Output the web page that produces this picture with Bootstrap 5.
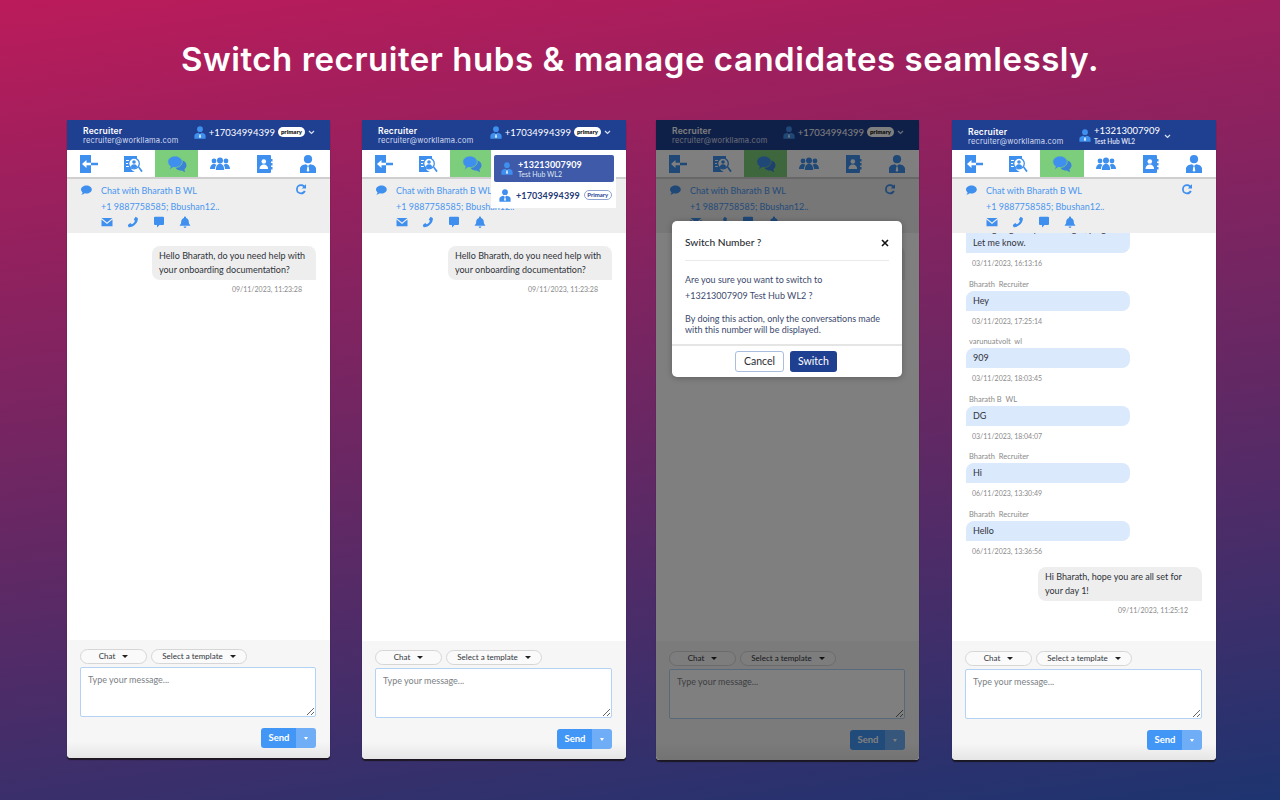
<!DOCTYPE html>
<html lang="en">
<head>
  <meta charset="UTF-8">
  <meta name="viewport" content="width=device-width, initial-scale=1.0">
  <title>Switch recruiter hubs</title>
  <link rel="stylesheet" href="https://cdn.jsdelivr.net/npm/bootstrap@5.3.0/dist/css/bootstrap.min.css">
  <style>
    html, body { height: 100%; }
    body {
      width: 1280px; height: 800px; overflow: hidden;
      background: linear-gradient(172deg, #bb1b5a 0%, #6a2763 52%, #1d3470 100%);
      font-family: "Lato", "Liberation Sans", sans-serif;
    }
    .hero-title {
      font-family: "Inter", "Liberation Sans", sans-serif;
      font-size: 33px; font-weight: 600; line-height: 40px; color: #fff;
      padding-top: 39px; margin: 0 0 41px; text-align: center; letter-spacing: .54px;
    }
    .phones { padding-left: 67px; gap: 32px; }
    .phone { width: 263px; position: relative; background: #fff; overflow: hidden; border-radius: 0 0 4px 4px; box-shadow: 0 2px 1px rgba(20, 15, 10, .75); }
    .ph-1 { height: 638px; }
    .ph-2 { height: 639px; width: 264px; }
    .ph-3, .ph-4 { height: 640px; }
    .ph-3 { margin-left: -2px; margin-right: 1px; }
    .ph-4 { width: 264px; }
    .ph-head { height: 30px; background: #1f4091; color: #fff; padding: 0 15px 0 16px; flex: none; }
    .ph-4 .rec-block { margin-top: 3px; }
    .rec-name { font-family: "Inter", sans-serif; font-size: 8.5px; font-weight: 600; letter-spacing: .2px; line-height: 10px; }
    .rec-mail { font-family: "Inter", sans-serif; font-size: 7.5px; letter-spacing: .2px; line-height: 9px; color: #d5def2; }
    .head-lift { margin-bottom: 6px; }
    .head-gap { margin-left: 2px; }
    .head-num { font-size: 9.5px; line-height: 11px; }
    .head-sub { font-size: 6.5px; font-weight: 700; line-height: 9px; color: #d5def2; margin-top: 1px; }
    .tag-pill { font-size: 6px; font-weight: 800; line-height: 10px; background: #fff; color: #222; border-radius: 5px; padding: 0 3px; margin: 0 3px 0 3px; }
    .tag-pill-line { font-size: 6px; font-weight: 700; line-height: 8px; color: #1f4091; border: 1px solid #8ea3d0; border-radius: 5px; padding: 0 2.5px; flex: none; }
    .caret-v { width: 7px; height: 5px; flex: none; }
    .caret-hub { margin: 3px 30px 0 4px; }
    .ph-tabs { height: 29px; flex: none; border-bottom: 2px solid #cfcfcf; background: #fff; }
    .ph-tab { flex: 1 1 0; }
    .ph-tab.on { background: #7dce7c; }
    .ico { fill: #3f90ee; display: block; flex: none; }
    .ico-tab { width: 20px; height: 18px; }
    .ph-info { height: 54px; flex: none; background: #eeeeee; color: #4a96f0; font-size: 9px; line-height: 16px; position: relative; z-index: 1; padding: 4px 0 0 13px; }
    .ico-sm { width: 12px; height: 12px; }
    .ico-lead { margin-top: 1px; }
    .info-body { margin-left: 9px; }
    .info-icons { gap: 14px; margin-top: 1px; }
    .info-reload { width: 12px; height: 12px; margin: 0 23px 0 auto; }
    .ph-msgs { overflow: hidden; padding: 13px 14px 0 0; }
    .msgs-hist { padding: 0 14px 26px 0; }
    .bub { width: 164px; font-size: 9px; line-height: 14px; color: #30333a; padding: 3px 7px; }
    .bub-out { background: #eeeeee; border-radius: 8px 8px 0 8px; }
    .bub-in { background: #dbe9fc; border-radius: 8px 8px 8px 0; }
    .msg-time { font-size: 7px; line-height: 10px; color: #8a8a8a; }
    .msg-name { font-size: 7.5px; line-height: 10px; color: #8a8a8a; padding-left: 3px; margin-bottom: 1px; }
    .msg-in { margin: 0 0 11.500px 14px; flex: none; }
    .msg-in .msg-time { padding: 5px 0 0 6px; }
    .msg-out { align-self: flex-end; margin: 0; flex: none; }
    .msg-out .msg-time { text-align: right; padding: 4px 14px 0 0; }
    .ph-foot { height: 118px; flex: none; background: linear-gradient(#f6f6f6 86%, #e6e6e6 100%); padding: 9px 14px 0 13px; }
    .ph-3 .ph-foot, .ph-4 .ph-foot { height: 119px; padding-top: 10px; }
    .pick { height: 15px; font-size: 8px; line-height: 13px; color: #33363c; background: #fafafa; border: 1px solid #d6d6d6; border-radius: 8px; }
    .pick-a { width: 67px; }
    .pick-b { width: 96px; }
    .pick::after { content: ""; margin-left: 7px; border-top: 3px solid #222; border-left: 3px solid transparent; border-right: 3px solid transparent; }
    .msg-box { height: 50px; font-size: 9px; line-height: 12px; padding: 6px 7px; border: 1px solid #b3d2f4; border-radius: 2px; margin-top: 3px; box-shadow: none; }
    .msg-box::placeholder { color: #7b7f85; }
    .send-row { margin-top: 11px; }
    .btn-send { background: #4296f5; color: #fff; font-size: 9.5px; font-weight: 700; width: 36px; height: 20px; padding: 0; border: 0; border-radius: 3px 0 0 3px; }
    .btn-send-more { background: #6fadf6; width: 20px; height: 20px; padding: 0; border: 0; border-radius: 0 3px 3px 0; }
    .btn-send-more::after { content: ""; border-top: 3px solid #fff; border-left: 2.5px solid transparent; border-right: 2.5px solid transparent; }
    .num-menu { position: absolute; left: 129px; top: 30px; width: 125px; height: 58px; background: #fff; z-index: 3; padding: 5px 2px 0 3px; }
    .num-on { height: 27px; background: #3e5aa8; color: #fff; border-radius: 2px; padding-left: 6px; }
    .num-off { height: 26px; padding-left: 4px; color: #1f3a78; }
    .num-txt { font-size: 9px; font-weight: 700; letter-spacing: .1px; line-height: 11px; flex: none; }
    .num-sub { font-size: 7px; line-height: 9px; color: #dfe6f6; }
    .ico-head { width: 14px; height: 15px; fill: #3f90ee; flex: none; }
    .dim { position: absolute; inset: 0; background: rgba(0, 0, 0, .5); z-index: 4; }
    .sw-modal { position: absolute; left: 16px; top: 101px; width: 230px; height: 156px; background: #fff; border-radius: 5px; z-index: 5; color: #3c4a6e; font-size: 9px; line-height: 11px; box-shadow: 0 1px 6px rgba(0,0,0,.25); }
    .sw-top { height: 40px; margin: 0 13px; border-bottom: 1px solid #eaeaea; color: #2a2d33; font-size: 10.2px; font-weight: 500; padding-top: 3px; }
    .sw-x { width: 8px; height: 8px; margin-top: 2px; }
    .sw-body { padding: 13px 13px 0; height: 83px; }
    .sw-body p { margin: 0 0 5px; }
    .sw-gap { padding-top: 7px; }
    .sw-foot { border-top: 2px solid #e5e5e5; height: 33px; gap: 6px; padding: 5px 2px 0 0; }
    .btn-cancel { width: 49px; height: 21px; padding: 0; font-size: 10.5px; color: #2a2d33; background: #fff; border: 1px solid #a9bede; border-radius: 3px; }
    .btn-switch { width: 47px; height: 21px; padding: 0; font-size: 10.5px; color: #fff; background: #1f4091; border: 0; border-radius: 3px; }
  </style>
</head>
<body>
  <svg width="0" height="0" class="position-absolute">
    <symbol id="i-exit" viewBox="0 0 20 18">
      <path d="M1 0h11v18H1z"/>
      <path fill="#fff" d="M3 9l4.500-4v2.800H12v2.400H7.500V13z"/>
      <path d="M12 7.800h7v2.400h-7z"/>
    </symbol>
    <symbol id="i-search" viewBox="0 0 20 18">
      <path d="M1 1h13v4.200a6 6 0 0 0-2 11.800H1z"/>
      <path fill="#fff" d="M3 5h4v1H3zM3 8h3v1H3zM3 11h3v1H3z"/>
      <circle cx="11" cy="8.500" r="5.300" fill="#fff" stroke="#3f90ee" stroke-width="1.300"/>
      <circle cx="11" cy="7" r="1.800"/>
      <path d="M7.800 12c.4-2 1.600-2.700 3.200-2.700s2.800.7 3.200 2.700a5 5 0 0 1-6.400 0z"/>
      <path d="M15 12.600l1.200-1 3.500 4.400-1.400 1.200z"/>
    </symbol>
    <symbol id="i-chats" viewBox="0 0 20 18">
      <path fill="#3a83d8" d="M13 5c3.600 0 6.500 2.300 6.500 5.300 0 1.600-.8 3-2.100 4l.6 3-3.300-1.800c-3.600.4-7-1.800-7-5.200S9.500 5 13 5z"/>
      <path stroke="#7dce7c" stroke-width=".8" d="M8 1c4 0 7.200 2.600 7.200 5.800S12 12.600 8 12.600c-.7 0-1.300 0-1.900-.2L2.600 15l.7-3.800C1.600 10.100.8 8.500.8 6.800.8 3.600 4 1 8 1z"/>
    </symbol>
    <symbol id="i-people" viewBox="0 0 20 18">
      <circle cx="4" cy="6" r="2.400"/><circle cx="16" cy="6" r="2.400"/>
      <path d="M0 14c0-3 1.500-5 4-5 1 0 1.800.3 2.400.8C5.500 11 5 12.500 5 14zM20 14c0-3-1.500-5-4-5-1 0-1.800.3-2.400.8.900 1.200 1.400 2.700 1.400 4.200z"/>
      <circle cx="10" cy="5.500" r="3"/>
      <path d="M5.800 15c0-4 1.700-6.300 4.200-6.300s4.200 2.300 4.200 6.300z"/>
    </symbol>
    <symbol id="i-book" viewBox="0 0 20 18">
      <path d="M3 0h13a1 1 0 0 1 1 1v3h1.500v2.500H17V8h1.500v2.500H17V12h1.500v2.500H17V17a1 1 0 0 1-1 1H3z"/>
      <circle cx="9.800" cy="6.500" r="2.300" fill="#fff"/>
      <path fill="#fff" d="M5.500 14c0-3 1.900-4.500 4.300-4.500s4.300 1.500 4.300 4.500z"/>
    </symbol>
    <symbol id="i-person" viewBox="0 0 20 18">
      <circle cx="10" cy="4.200" r="4.100"/>
      <path d="M2 18v-4.500c0-2.400 3-4 6-4.300L10 11l2-1.800c3 .3 6 1.900 6 4.300V18z"/>
      <path fill="#fff" d="M9.400 11.500h1.200l.6 4-1.200 1.600-1.200-1.600z"/>
    </symbol>
    <symbol id="i-bubble" viewBox="0 0 12 12">
      <path d="M6.500 1.500c3 0 5.300 1.700 5.300 4s-2.300 4-5.300 4c-.6 0-1.200-.1-1.700-.2-1 .9-2.300 1.300-3.600 1.300.7-.6 1.200-1.300 1.400-2.200C1.700 7.600 1 6.600 1 5.500c0-2.300 2.500-4 5.500-4z"/>
    </symbol>
    <symbol id="i-mail" viewBox="0 0 12 12">
      <path d="M.5 2h11L6 6.400zM.5 3.600v6.700h11V3.600L6 8z"/>
    </symbol>
    <symbol id="i-phone" viewBox="0 0 12 12">
      <path d="M8.600.8l2.300 1.400c.3 4.400-4.300 9.300-9.300 9L.8 9.100l2.500-2 1.400 1.200c1.400-.6 2.700-2 3.200-3.600L6.800 3.400z"/>
    </symbol>
    <symbol id="i-note" viewBox="0 0 12 12">
      <path d="M2 .8h8a1 1 0 0 1 1 1V8a1 1 0 0 1-1 1H6.500L4 11.400V9H2a1 1 0 0 1-1-1V1.800a1 1 0 0 1 1-1z"/>
    </symbol>
    <symbol id="i-bell" viewBox="0 0 12 12">
      <path d="M6 .5c.6 0 1 .4 1 1v.4c1.800.5 2.800 2 2.800 3.900 0 1.600.5 2.600 1.400 3.300v.7H.8v-.7c.9-.7 1.400-1.700 1.400-3.300 0-1.900 1-3.400 2.800-3.900v-.4c0-.6.4-1 1-1zM4.600 10.500h2.800a1.400 1.400 0 0 1-2.800 0z"/>
    </symbol>
    <symbol id="i-reload" viewBox="0 0 12 12">
      <path d="M6 1.200c1.400 0 2.600.5 3.500 1.400L11 1.200v4.200H6.800l1.500-1.500A3.300 3.300 0 0 0 6 3a3.200 3.200 0 0 0 0 6.400c1.300 0 2.400-.8 2.900-1.900l1.800.7A5 5 0 1 1 6 1.200z"/>
    </symbol>
  </svg>

  <h1 class="hero-title">Switch recruiter hubs &amp; manage candidates seamlessly.</h1>
  <div class="phones d-flex align-items-start" id="phones"></div>

  <script>
    const icon = (name, cls) => `<svg class="ico ${cls}"><use href="#i-${name}"></use></svg>`;
    const tabs = ['exit', 'search', 'chats', 'people', 'book', 'person'];

    const outMsg = (text, time) => `
      <div class="msg-out">
        <div class="bub bub-out">${text}</div>
        <div class="msg-time">${time}</div>
      </div>`;
    const inMsg = (name, text, time) => `
      <div class="msg-in">
        ${name ? `<div class="msg-name">${name}</div>` : ''}
        <div class="bub bub-in">${text}</div>
        <div class="msg-time">${time}</div>
      </div>`;

    const hello = outMsg('Hello Bharath, do you need help with your onboarding documentation?', '09/11/2023, 11:23:28');
    const history = [
      inMsg('', 'I am going to try this tonight, ping<br>Let me know.', '03/11/2023, 16:13:16'),
      inMsg('Bharath&nbsp; Recruiter', 'Hey', '03/11/2023, 17:25:14'),
      inMsg('varunuatvolt&nbsp; wl', '909', '03/11/2023, 18:03:45'),
      inMsg('Bharath B&nbsp; WL', 'DG', '03/11/2023, 18:04:07'),
      inMsg('Bharath&nbsp; Recruiter', 'Hi', '06/11/2023, 13:30:49'),
      inMsg('Bharath&nbsp; Recruiter', 'Hello', '06/11/2023, 13:36:56'),
      outMsg('Hi Bharath, hope you are all set for your day 1!', '09/11/2023, 11:25:12')
    ].join('');

    const headNumber = hub => hub
      ? `<div class="head-gap"><div class="head-num">+13213007909</div><div class="head-sub">Test Hub WL2</div></div>`
      : `<div class="head-num head-gap">+17034994399</div><span class="tag-pill">primary</span>`;

    const phone = (n, opts) => `
      <div class="phone ph-${n} d-flex flex-column">
        <div class="ph-head d-flex align-items-center">
          <div class="rec-block flex-grow-1">
            <div class="rec-name">Recruiter</div>
            <div class="rec-mail">recruiter@workllama.com</div>
          </div>
          <div class="d-flex align-items-center ${opts.hub ? '' : 'head-lift'}">
            <svg class="ico-head"><use href="#i-person"></use></svg>
            ${headNumber(opts.hub)}
            <svg class="caret-v ${opts.hub ? 'caret-hub' : ''}" viewBox="0 0 7 5" fill="none" stroke="#d5def2" stroke-width="1.200"><path d="M1 1l2.500 2.500L6 1"/></svg>
          </div>
        </div>
        <div class="ph-tabs d-flex">
          ${tabs.map((t, i) => `<div class="ph-tab d-flex align-items-center justify-content-center ${i === 2 ? 'on' : ''}">${icon(t, 'ico-tab')}</div>`).join('')}
        </div>
        <div class="ph-info d-flex">
          ${icon('bubble', 'ico-sm ico-lead')}
          <div class="info-body">
            <div>Chat with Bharath B WL</div>
            <div>+1 9887758585; Bbushan12..</div>
            <div class="info-icons d-flex">
              ${['mail', 'phone', 'note', 'bell'].map(t => icon(t, 'ico-sm')).join('')}
            </div>
          </div>
          ${icon('reload', 'info-reload')}
        </div>
        <div class="ph-msgs flex-grow-1 d-flex flex-column ${opts.hub ? 'justify-content-end msgs-hist' : ''}">
          ${opts.hub ? history : hello}
        </div>
        <div class="ph-foot">
          <div class="d-flex gap-1">
            <div class="pick pick-a d-flex align-items-center justify-content-center">Chat</div>
            <div class="pick pick-b d-flex align-items-center justify-content-center">Select a template</div>
          </div>
          <textarea class="form-control msg-box" placeholder="Type your message..."></textarea>
          <div class="send-row d-flex justify-content-end">
            <div class="btn-group">
              <button class="btn btn-send">Send</button>
              <button class="btn btn-send-more d-flex align-items-center justify-content-center"></button>
            </div>
          </div>
        </div>
        ${opts.menu ? `
        <div class="num-menu">
          <div class="num-on d-flex align-items-center gap-1">
            <svg class="ico-head"><use href="#i-person"></use></svg>
            <div><div class="num-txt">+13213007909</div><div class="num-sub">Test Hub WL2</div></div>
          </div>
          <div class="num-off d-flex align-items-center gap-1">
            <svg class="ico-head"><use href="#i-person"></use></svg>
            <div class="num-txt">+17034994399</div>
            <span class="tag-pill-line">Primary</span>
          </div>
        </div>` : ''}
        ${opts.modal ? `
        <div class="dim"></div>
        <div class="sw-modal">
          <div class="sw-top d-flex justify-content-between align-items-center">
            <span>Switch Number ?</span>
            <svg class="sw-x" viewBox="0 0 8 8" stroke="#111" stroke-width="1.600"><path d="M1 1l6 6M7 1L1 7"/></svg>
          </div>
          <div class="sw-body">
            <p>Are you sure you want to switch to</p>
            <p>+13213007909 Test Hub WL2 ?</p>
            <div class="sw-gap">By doing this action, only the conversations made with this number will be displayed.</div>
          </div>
          <div class="sw-foot d-flex justify-content-center">
            <button class="btn btn-cancel">Cancel</button>
            <button class="btn btn-switch">Switch</button>
          </div>
        </div>` : ''}
      </div>`;

    document.getElementById('phones').innerHTML = [
      phone(1, {}),
      phone(2, { menu: true }),
      phone(3, { modal: true }),
      phone(4, { hub: true })
    ].join('');
  </script>
  <script src="https://cdn.jsdelivr.net/npm/bootstrap@5.3.0/dist/js/bootstrap.bundle.min.js"></script>
</body>
</html>
